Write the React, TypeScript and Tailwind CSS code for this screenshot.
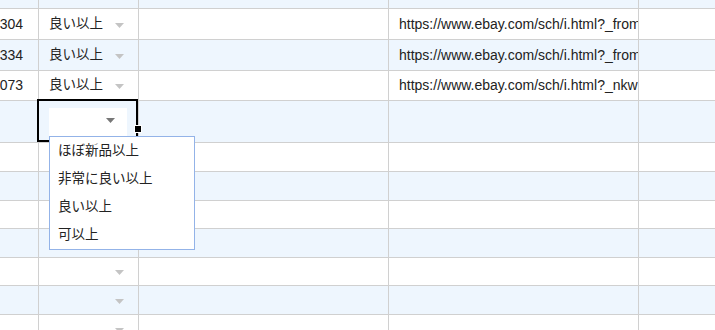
import React from 'react';

type Row = { h: string; blue: boolean; num?: string; grade?: string; url?: string; arrow?: boolean };

const rows: Row[] = [
  { h: 'h-[9px]', blue: true },
  { h: 'h-[31px]', blue: false, num: '304', grade: '良い以上', url: 'https://www.ebay.com/sch/i.html?_from', arrow: true },
  { h: 'h-[31px]', blue: true, num: '334', grade: '良い以上', url: 'https://www.ebay.com/sch/i.html?_from', arrow: true },
  { h: 'h-[30px]', blue: false, num: '073', grade: '良い以上', url: 'https://www.ebay.com/sch/i.html?_nkw', arrow: true },
  { h: 'h-[42px]', blue: true },
  { h: 'h-[29px]', blue: false },
  { h: 'h-[29px]', blue: true },
  { h: 'h-[28px]', blue: false },
  { h: 'h-[29px]', blue: true },
  { h: 'h-[28px]', blue: false, arrow: true },
  { h: 'h-[29px]', blue: true, arrow: true },
  { h: 'h-[29px]', blue: false, arrow: true },
];

const options = ['ほぼ新品以上', '非常に良い以上', '良い以上', '可以上'];

function Caret({ dark }: { dark?: boolean }) {
  return (
    <svg width="9" height="5" viewBox="0 0 9 5" className="shrink-0">
      <path d="M0 0h9L4.5 5z" fill={dark ? '#777777' : '#c4c4c4'} />
    </svg>
  );
}

export default function App() {
  return (
    <div
      className="relative w-[715px] h-[330px] overflow-hidden bg-white text-[13.5px] text-[#222]"
      style={{ fontFamily: '"Liberation Sans", Arial, "Noto Sans CJK JP", sans-serif' }}
    >
      {rows.map((r, i) => (
        <div key={i} className={`flex ${r.h} border-b border-[#d0d0d0] ${r.blue ? 'bg-[#eef6fe]' : 'bg-white'}`}>
          <div className="w-[39px] shrink-0 border-r border-[#d0d0d0] flex items-center justify-end pr-[15px] overflow-hidden whitespace-nowrap text-[14px]">
            {r.num}
          </div>
          <div className="w-[100px] shrink-0 border-r border-[#d0d0d0] flex items-center pl-[10px] pr-[14px]">
            <span className="flex-1 whitespace-nowrap">{r.grade}</span>
            {r.arrow && <span className="mt-[2px]"><Caret /></span>}
          </div>
          <div className="w-[250px] shrink-0 border-r border-[#d0d0d0]" />
          <div className="w-[250px] shrink-0 border-r border-[#d0d0d0] flex items-center pl-[10px] overflow-hidden whitespace-nowrap text-[14px]">
            {r.url}
          </div>
          <div className="flex-1" />
        </div>
      ))}

      {/* selected cell with open editor */}
      <div className="absolute left-[37px] top-[99px] w-[101px] h-[43px] border-2 border-black">
        <div className="ml-[10px] mt-[7px] w-[78px] h-[30px] bg-white flex items-start justify-end pr-[12px] pt-[10px]">
          <Caret dark />
        </div>
      </div>
      <div className="absolute left-[134px] top-[125px] w-[6px] h-[6px] bg-black border border-white box-content" />

      {/* dropdown list */}
      <div className="absolute left-[49px] top-[136px] w-[146px] border border-[#93b3e8] bg-white">
        {options.map((o) => (
          <div key={o} className="h-[28px] flex items-center pl-[8px] whitespace-nowrap">
            {o}
          </div>
        ))}
      </div>
    </div>
  );
}
